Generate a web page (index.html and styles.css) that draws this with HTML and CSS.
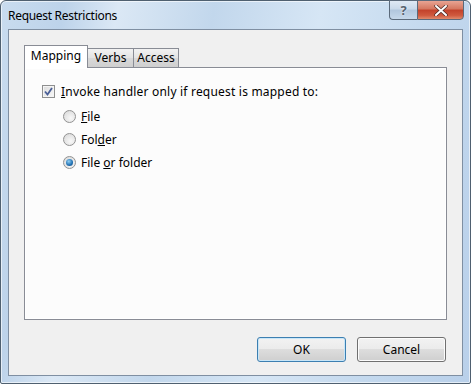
FILE: index.html
```html
<!DOCTYPE html>
<html>
<head>
<meta charset="utf-8">
<link rel="stylesheet" href="styles.css">
</head>
<body>
<div class="window">
  <div class="titlebar">
    <div class="title">Request Restrictions</div>
    <div class="caption-btns">
      <div class="cap help">?</div>
      <div class="cap close">
        <svg width="14" height="11" viewBox="0 0 14 11"><path d="M2 1 L12 10 M12 1 L2 10" stroke="#4a2a25" stroke-width="3.4" stroke-linecap="round"/><path d="M2 1 L12 10 M12 1 L2 10" stroke="#fff" stroke-width="2" stroke-linecap="round"/></svg>
      </div>
    </div>
  </div>
  <div class="client">
    <div class="tabs">
      <div class="tab active t-map">Mapping</div>
      <div class="tab t-verbs">Verbs</div>
      <div class="tab t-access">Access</div>
    </div>
    <div class="panel">
      <label class="row check-row">
        <span class="checkbox">
          <svg width="9" height="9" viewBox="0 0 9 9"><path d="M1 4.5 L3.5 7.5 L8 1" fill="none" stroke="#4a5f97" stroke-width="1.8"/></svg>
        </span>
        <span class="invoke"><u>I</u>nvoke handler only if request is mapped to:</span>
      </label>
      <div class="radios">
        <label class="row radio-row"><span class="radio"></span><span><u>F</u>ile</span></label>
        <label class="row radio-row"><span class="radio"></span><span>Fol<u>d</u>er</span></label>
        <label class="row radio-row"><span class="radio on"><span class="dot"></span></span><span>File <u>o</u>r folder</span></label>
      </div>
    </div>
    <div class="buttons">
      <div class="btn default">OK</div>
      <div class="btn">Cancel</div>
    </div>
  </div>
</div>
</body>
</html>
```
FILE: styles.css
```css
* { box-sizing: border-box; }
html, body { margin: 0; padding: 0; }
body {
  width: 471px; height: 384px; overflow: hidden;
  font-family: "Noto Sans", "Open Sans", sans-serif;
  font-size: 12px; color: #000;
}
.window {
  width: 471px; height: 384px;
  border: 1px solid #4f6070;
  border-radius: 6px 6px 2px 2px;
  background: linear-gradient(100deg, #c9dcef 0%, #bdd3ea 12%, #dbe8f5 22%, #c2d7ec 40%, #d6e6f5 60%, #c4d9ee 80%, #b9d0ea 100%);
  display: flex; flex-direction: column;
  box-shadow: inset 0 0 0 1px rgba(255,255,255,0.6);
}
.titlebar {
  height: 28px;
  display: flex; justify-content: space-between; align-items: flex-start;
  padding: 0 6px 0 7px;
}
.title { font-size: 12px; color: #000; padding-top: 6px; letter-spacing: -0.3px; }
.caption-btns { display: flex; margin-top: -1px; }
.cap {
  height: 20px; display: flex; align-items: center; justify-content: center;
  border: 1px solid #5b6a7b;
}
.help {
  width: 28px; border-right: none; border-radius: 0 0 0 4px;
  background: linear-gradient(#dfe9f4 0%, #c9d9ea 45%, #b1c6dd 50%, #c6d8ea 100%);
  color: #55616e; font-weight: bold; font-size: 13px;
  text-shadow: 0 0 2px #fff;
}
.close {
  width: 47px; border-radius: 0 0 4px 0;
  background: linear-gradient(#e8a493 0%, #d4765f 45%, #c2412a 50%, #d05a3e 80%, #e08a6c 100%);
}
.client {
  flex: 1; margin: 0 7px 7px 7px;
  border: 1px solid #7f8fa2;
  background: #f0f0f0;
  padding: 15px 15px 13px 15px;
  display: flex; flex-direction: column;
}
.tabs { display: flex; height: 22px; align-items: flex-end; position: relative; z-index: 1; }
.tab {
  height: 19px;
  border: 1px solid #898c95; border-bottom: none;
  margin-right: -1px;
  background: linear-gradient(#f2f2f2, #e3e3e3 50%, #d9d9d9 51%, #cfcfcf);
  line-height: 17px; text-align: center;
}
.t-map { width: 64px; }
.t-verbs { width: 47px; }
.t-access { width: 46px; }
.tab.active {
  height: 23px; margin-bottom: -1px; background: #fff;
  line-height: 20px;
}
.panel {
  height: 253px;
  border: 1px solid #898c95;
  background: #fcfcfc;
  box-shadow: inset 0 0 0 1px #fff;
  padding: 16px 0 0 17px;
}
.row { display: flex; align-items: center; }
.check-row { height: 14px; gap: 6px; }
.invoke { letter-spacing: 0.2px; }
.checkbox {
  width: 13px; height: 13px; border: 1px solid #8e8f8f;
  background: linear-gradient(135deg, #dcdcdc, #f8f8f8);
  display: flex; align-items: center; justify-content: center;
  box-shadow: inset 0 0 0 1px #f4f4f4;
}
.radios { padding-left: 21px; padding-top: 11px; display: flex; flex-direction: column; gap: 9px; }
.radio-row { height: 14px; gap: 5px; }
.radio {
  width: 13px; height: 13px; border-radius: 50%;
  border: 1px solid #929292;
  background: radial-gradient(circle at 60% 65%, #f8f8f8, #d6d6d6);
  display: flex; align-items: center; justify-content: center;
}
.radio .dot {
  width: 7px; height: 7px; border-radius: 50%;
  background: radial-gradient(circle at 40% 35%, #8fd0f5, #1f6eb0 60%, #15497c);
}
.buttons { display: flex; justify-content: flex-end; gap: 11px; margin-top: 17px; padding-right: 1px; }
.btn {
  width: 89px; height: 25px; border: 1px solid #707070; border-radius: 3px;
  background: linear-gradient(#f2f2f2 0%, #ebebeb 49%, #dddddd 50%, #cfcfcf 100%);
  box-shadow: inset 0 0 0 1px #fcfcfc;
  display: flex; align-items: center; justify-content: center;
}
.btn.default { border-color: #3c7fb1; box-shadow: inset 0 0 0 1px #c8e6f8; }
```
